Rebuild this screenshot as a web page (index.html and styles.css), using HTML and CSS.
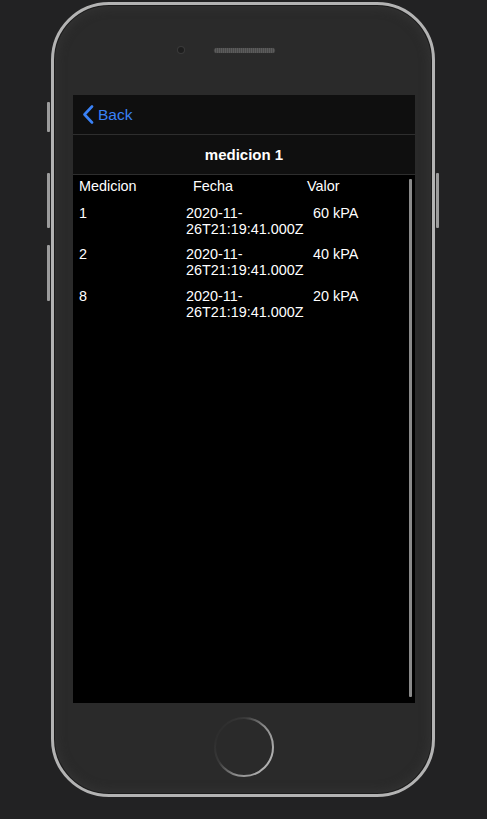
FILE: index.html
```html
<!DOCTYPE html>
<html lang="es">
<head>
<meta charset="utf-8">
<title>medicion 1</title>
<link rel="stylesheet" href="styles.css">
</head>
<body>
<div class="phone">
  <span class="side-btn mute"></span>
  <span class="side-btn vol-up"></span>
  <span class="side-btn vol-down"></span>
  <span class="side-btn power"></span>
  <div class="phone-top">
    <span class="camera"></span>
    <span class="speaker"></span>
  </div>
  <div class="screen">
    <div class="nav-row">
      <svg class="chevron" width="12" height="19" viewBox="0 0 12 19"><path d="M10 1.5 L2.5 9.5 L10 17.5" fill="none" stroke="#3a82f7" stroke-width="2.6" stroke-linecap="round" stroke-linejoin="round"/></svg>
      <span class="back-label">Back</span>
    </div>
    <div class="title-row">medicion 1</div>
    <div class="content">
      <div class="table-head">
        <div class="th">Medicion</div>
        <div class="th">Fecha</div>
        <div class="th">Valor</div>
      </div>
      <div class="rows">
        <div class="row">
          <div>1</div>
          <div>2020-11-<br>26T21:19:41.000Z</div>
          <div>60 kPA</div>
        </div>
        <div class="row">
          <div>2</div>
          <div>2020-11-<br>26T21:19:41.000Z</div>
          <div>40 kPA</div>
        </div>
        <div class="row">
          <div>8</div>
          <div>2020-11-<br>26T21:19:41.000Z</div>
          <div>20 kPA</div>
        </div>
      </div>
      <span class="scrollbar"></span>
    </div>
  </div>
  <div class="phone-bottom">
    <svg class="home" width="62" height="62" viewBox="0 0 62 62">
      <defs>
        <linearGradient id="hg" x1="0" y1="0.2" x2="1" y2="0.8">
          <stop offset="0" stop-color="#2a2a2a"/>
          <stop offset="0.3" stop-color="#3a3a3a"/>
          <stop offset="0.6" stop-color="#8a8a8a"/>
          <stop offset="1" stop-color="#b8b8b8"/>
        </linearGradient>
      </defs>
      <circle cx="31" cy="31" r="29" fill="none" stroke="url(#hg)" stroke-width="2"/>
    </svg>
  </div>
</div>
</body>
</html>
```

FILE: styles.css
```css
html, body {
  margin: 0;
  padding: 0;
  background: #222223;
  font-family: "Liberation Sans", Arial, sans-serif;
}

body {
  width: 487px;
  height: 819px;
  overflow: hidden;
}

.phone {
  position: relative;
  margin: 2px 0 0 51px;
  width: 384px;
  height: 795px;
  box-sizing: border-box;
  border: 3px solid #b3b3b3;
  border-radius: 58px;
  background: #2a2a2a;
  box-shadow: inset 0 0 0 1px #1c1c1c, inset 0 0 10px 3px #333;
  display: flex;
  flex-direction: column;
  padding-left: 19px;
}

.side-btn {
  position: absolute;
  width: 3px;
  background: #9c9c9c;
  border-radius: 1px;
}
.side-btn.mute { left: -7px; top: 97px; height: 30px; }
.side-btn.vol-up { left: -7px; top: 168px; height: 55px; }
.side-btn.vol-down { left: -7px; top: 240px; height: 56px; }
.side-btn.power { right: -7px; top: 168px; height: 55px; }

.phone-top {
  height: 90px;
  box-sizing: border-box;
  display: flex;
  align-items: center;
  padding: 0 0 0 105px;
  gap: 30px;
}
.camera {
  width: 6px;
  height: 6px;
  border-radius: 50%;
  background: #1e1e1e;
  box-shadow: 0 0 0 1px #3a3a3a;
}
.speaker {
  width: 61px;
  height: 5px;
  border-radius: 3px;
  background: repeating-linear-gradient(90deg, #4a4a4a 0 1px, #5c5c5c 1px 2px);
  box-shadow: 0 0 1px #444;
  margin-top: 1px;
}

.screen {
  width: 342px;
  height: 608px;
  background: #000;
  display: flex;
  flex-direction: column;
}

.nav-row {
  height: 39px;
  background: #0f0f0f;
  border-bottom: 1px solid #2e2e2e;
  display: flex;
  align-items: center;
  padding-left: 9px;
  gap: 4px;
}
.back-label {
  color: #3a82f7;
  font-size: 15.5px;
  margin-top: 1px;
}

.title-row {
  height: 40px;
  box-sizing: border-box;
  background: #0f0f0f;
  border-bottom: 1px solid #2e2e2e;
  display: flex;
  align-items: center;
  justify-content: center;
  color: #fff;
  font-weight: bold;
  font-size: 15px;
}

.content {
  position: relative;
  flex: 1;
  color: #fff;
  font-size: 14.4px;
  line-height: 16px;
}

.table-head {
  display: grid;
  grid-template-columns: repeat(3, 114px);
  padding-top: 3px;
}
.th {
  padding-left: 6px;
}

.rows {
  display: flex;
  flex-direction: column;
  gap: 9.6px;
  padding-top: 10.8px;
}
.row {
  display: grid;
  grid-template-columns: 107px 127px 1fr;
  padding-left: 6px;
}

.scrollbar {
  position: absolute;
  right: 3px;
  top: 4px;
  bottom: 6px;
  width: 3px;
  background: #8a8a8a;
  border-radius: 1px;
}

.phone-bottom {
  width: 342px;
  display: flex;
  justify-content: center;
  padding-top: 13px;
}
.home {
  display: block;
}
```
